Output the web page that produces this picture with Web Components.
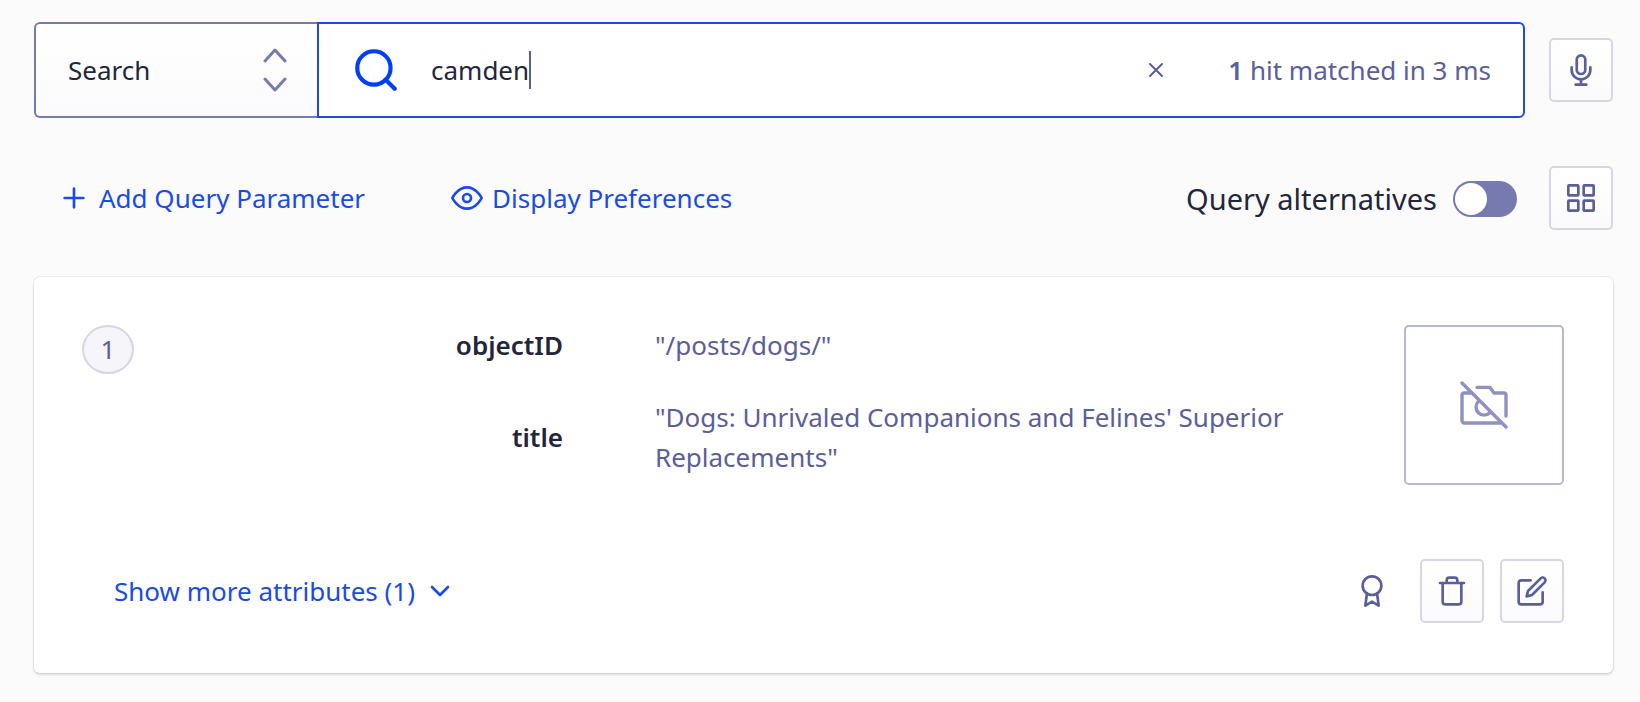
<!DOCTYPE html>
<html lang="en">
<head>
<meta charset="utf-8">
<title>Browse index</title>
<style>
  body {
    margin: 0;
    background: #fbfbfc;
    color: #23263b;
    font-family: "Noto Sans", "Open Sans", sans-serif;
    font-size: 26px;
    line-height: 40px;
    --blue: #1a4be4;
    --ink: #23263b;
    --muted: #5a5e9a;
    --line: #d6d6e7;
  }
</style>
</head>
<body>
<index-browser></index-browser>

<script>
'use strict'

const ICONS = {
  search: '<circle cx="11" cy="11" r="8"/><path d="M21 21l-4.35-4.35"/>',
  close: '<path d="M18 6L6 18M6 6l12 12"/>',
  mic: '<path d="M12 1a3.2 3.2 0 0 0-3.2 3.2v7.6a3.2 3.2 0 0 0 6.4 0V4.200a3.2 3.2 0 0 0-3.200-3.200z"/><path d="M19 10v2a7 7 0 0 1-14 0v-2M12 19v4M8 23h8"/>',
  plus: '<path d="M12 5v14M5 12h14"/>',
  eye: '<path d="M1 12s4-8 11-8 11 8 11 8-4 8-11 8-11-8-11-8z"/><circle cx="12" cy="12" r="3"/>',
  grid: '<rect x="2.500" y="2.500" width="7.500" height="7.500" rx=".5"/><rect x="14" y="2.500" width="7.500" height="7.500" rx=".5"/><rect x="14" y="14" width="7.500" height="7.500" rx=".5"/><rect x="2.500" y="14" width="7.500" height="7.500" rx=".5"/>',
  camera: '<g stroke-width="1.700"><path d="M1 1l22 22M20.500 21H2.200A1.200 1.200 0 0 1 1 19.800V7.200A1.200 1.200 0 0 1 2.200 6H5.500M8.500 3.200h6.500l2 2.800h4.800A1.200 1.200 0 0 1 23 7.200v10.300M14.900 15.900a4 4 0 1 1-5.700-5.700"/></g>',
  down: '<path d="M6 9l6 6 6-6"/>',
  award: '<circle cx="12" cy="8" r="7"/><path d="M8.21 13.89L7 23l5-3 5 3-1.21-9.12"/>',
  trash: '<path d="M3 6h18M19 6v14a2 2 0 0 1-2 2H7a2 2 0 0 1-2-2V6m3 0V4a2 2 0 0 1 2-2h4a2 2 0 0 1 2 2v2"/>',
  edit: '<path d="M11 4H4a2 2 0 0 0-2 2v14a2 2 0 0 0 2 2h14a2 2 0 0 0 2-2v-7"/><path d="M18.5 2.5a2.121 2.121 0 0 1 3 3L12 15l-4 1 1-4 9.5-9.5z"/>'
}

class LineIcon extends HTMLElement {
  connectedCallback() {
    const root = this.attachShadow({ mode: 'open' })
    root.innerHTML = `
    <style>
    :host {
      display: block;
      flex: none;
      width: var(--size, 32px);
      height: var(--size, 32px);
    }
    svg {
      display: block;
      width: 100%;
      height: 100%;
      fill: none;
      stroke: currentColor;
      stroke-width: 2;
      stroke-linecap: round;
      stroke-linejoin: round;
    }
    </style>
    <svg viewBox="0 0 24 24" aria-hidden="true">${ICONS[this.getAttribute('name')]}</svg>
    `
  }
}

class IconButton extends HTMLElement {
  connectedCallback() {
    const root = this.attachShadow({ mode: 'open' })
    root.innerHTML = `
    <style>
    :host {
      display: block;
      flex: none;
    }
    button {
      display: grid;
      place-items: center;
      box-sizing: border-box;
      width: 64px;
      height: 64px;
      padding: 0;
      border: 2px solid var(--line);
      border-radius: 5px;
      background: linear-gradient(#fff, #fbfbfd);
      color: var(--muted);
      cursor: pointer;
    }
    :host([plain]) button {
      border-color: transparent;
      background: none;
    }
    </style>
    <button type="button" aria-label="${this.getAttribute('label')}">
      <line-icon name="${this.getAttribute('icon')}"></line-icon>
    </button>
    `
  }
}

class TextButton extends HTMLElement {
  connectedCallback() {
    const root = this.attachShadow({ mode: 'open' })
    root.innerHTML = `
    <style>
    :host {
      display: block;
    }
    button {
      display: flex;
      align-items: center;
      gap: 9px;
      padding: 0;
      border: 0;
      background: none;
      color: var(--blue);
      font: inherit;
      cursor: pointer;
    }
    </style>
    <button type="button"><slot name="before"></slot><slot></slot><slot name="after"></slot></button>
    `
  }
}

class SearchBar extends HTMLElement {
  connectedCallback() {
    const root = this.attachShadow({ mode: 'open' })
    root.innerHTML = `
    <style>
    :host {
      display: flex;
      flex: 1;
      height: 96px;
      min-width: 0;
    }
    .mode {
      display: grid;
      flex: none;
      width: 283px;
      align-items: center;
    }
    .mode > * {
      grid-area: 1 / 1;
    }
    select {
      box-sizing: border-box;
      width: 100%;
      height: 100%;
      padding: 0 64px 0 32px;
      border: 2px solid #777aaf;
      border-right: 0;
      border-radius: 6px 0 0 6px;
      appearance: none;
      background: linear-gradient(#fff, #fbfbfd);
      color: var(--ink);
      font: inherit;
    }
    .mode svg {
      justify-self: end;
      margin-right: 30px;
      fill: none;
      stroke: #777aaf;
      stroke-width: 3;
      stroke-linecap: round;
      stroke-linejoin: round;
      pointer-events: none;
    }
    .query {
      display: flex;
      flex: 1;
      box-sizing: border-box;
      min-width: 0;
      align-items: center;
      padding: 0 32px;
      border: 2px solid var(--blue);
      border-radius: 0 6px 6px 0;
      background: #fff;
    }
    .query > line-icon {
      --size: 50px;
      color: #003dff;
    }
    .value {
      flex: 1;
      padding-left: 30px;
      line-height: 0;
    }
    input {
      height: 38px;
      min-width: 2px;
      padding: 0;
      border: 0;
      border-right: 2px solid #5a5e9a;
      outline: 0;
      background: none;
      color: var(--ink);
      font: inherit;
      field-sizing: content;
    }
    .clear {
      padding: 0;
      border: 0;
      background: none;
      color: var(--muted);
      --size: 24px;
    }
    output {
      padding-left: 60px;
      color: var(--muted);
      white-space: nowrap;
    }
    </style>
    <div class="mode">
      <select aria-label="Mode"><option>Search</option></select>
      <svg width="24" height="44" aria-hidden="true"><path d="M2 13L12 2l10 11M2 31l10 11 10-11"/></svg>
    </div>
    <div class="query">
      <line-icon name="search"></line-icon>
      <div class="value"><input type="text" aria-label="Query" value="camden" spellcheck="false"></div>
      <button class="clear" type="button" aria-label="Clear"><line-icon name="close"></line-icon></button>
      <output><slot></slot></output>
    </div>
    `
    root.querySelector('.clear').onclick = () => {
      root.querySelector('input').value = ''
    }
  }
}

class ToggleSwitch extends HTMLElement {
  connectedCallback() {
    const root = this.attachShadow({ mode: 'open' })
    root.innerHTML = `
    <style>
    :host {
      display: block;
    }
    label {
      display: flex;
      align-items: center;
      gap: 16px;
      padding-top: 2px;
      font-size: 29px;
    }
    input {
      display: flex;
      box-sizing: border-box;
      width: 64px;
      height: 36px;
      margin: 0;
      padding: 2px;
      border-radius: 18px;
      appearance: none;
      background: #777aaf;
    }
    input::before {
      content: "";
      width: 32px;
      height: 32px;
      border-radius: 50%;
      background: #fff;
    }
    input:checked {
      justify-content: flex-end;
      background: var(--blue);
    }
    </style>
    <label><slot></slot><input type="checkbox" role="switch"></label>
    `
  }
}

class HitCard extends HTMLElement {
  connectedCallback() {
    const root = this.attachShadow({ mode: 'open' })
    root.innerHTML = `
    <style>
    :host {
      display: block;
      padding: 48px 49px 50px 48px;
      border-radius: 6px;
      background: #fff;
      box-shadow: 0 0 0 1px rgba(35, 38, 59, 0.07), 0 2px 3px rgba(35, 38, 59, 0.14);
    }
    .body {
      display: grid;
      grid-template-columns: 52px 1fr 160px;
      column-gap: 48px;
      align-items: start;
    }
    .rank {
      box-sizing: border-box;
      height: 49px;
      border: 2px solid var(--line);
      border-radius: 50%;
      background: #f5f5fa;
      color: var(--muted);
      line-height: 45px;
      text-align: center;
    }
    dl {
      display: grid;
      grid-template-columns: 1fr 701px;
      gap: 32px 92px;
      align-items: center;
      margin: 0;
    }
    dt {
      font-weight: 600;
      text-align: right;
    }
    dd {
      margin: 0;
      color: var(--muted);
    }
    .picture {
      display: grid;
      box-sizing: border-box;
      height: 160px;
      place-items: center;
      border: 2px solid #b6b7d5;
      border-radius: 5px;
      color: #8f91c0;
      --size: 48px;
    }
    footer {
      display: flex;
      align-items: center;
      gap: 16px;
      margin-top: 74px;
    }
    text-button {
      flex: 1;
      padding-left: 32px;
    }
    </style>
    <div class="body">
      <div class="rank"><slot name="rank"></slot></div>
      <dl>
        <dt>objectID</dt>
        <dd><slot name="object-id"></slot></dd>
        <dt>title</dt>
        <dd><slot name="title"></slot></dd>
      </dl>
      <div class="picture" role="img" aria-label="No image"><line-icon name="camera"></line-icon></div>
    </div>
    <footer>
      <text-button>Show more attributes (1)<line-icon slot="after" name="down"></line-icon></text-button>
      <icon-button plain icon="award" label="Ranking"></icon-button>
      <icon-button icon="trash" label="Delete"></icon-button>
      <icon-button icon="edit" label="Edit"></icon-button>
    </footer>
    `
  }
}

class IndexBrowser extends HTMLElement {
  connectedCallback() {
    const root = this.attachShadow({ mode: 'open' })
    root.innerHTML = `
    <style>
    :host {
      display: block;
      padding: 22px 27px 28px 34px;
    }
    .row {
      display: flex;
      align-items: center;
      gap: 24px;
    }
    .tools {
      gap: 32px;
      margin: 48px 0 47px;
      padding-left: 24px;
    }
    .links {
      display: flex;
      flex: 1;
      gap: 86px;
    }
    b {
      font-weight: 600;
    }
    </style>
    <div class="row">
      <search-bar><b>1</b> hit matched in 3 ms</search-bar>
      <icon-button icon="mic" label="Voice search"></icon-button>
    </div>
    <div class="row tools">
      <div class="links">
        <text-button><line-icon slot="before" name="plus"></line-icon>Add Query Parameter</text-button>
        <text-button><line-icon slot="before" name="eye"></line-icon>Display Preferences</text-button>
      </div>
      <toggle-switch>Query alternatives</toggle-switch>
      <icon-button icon="grid" label="Grid view"></icon-button>
    </div>
    <hit-card>
      <span slot="rank">1</span>
      <span slot="object-id">"/posts/dogs/"</span>
      <span slot="title">"Dogs: Unrivaled Companions and Felines' Superior Replacements"</span>
    </hit-card>
    `
  }
}

customElements.define('line-icon', LineIcon)
customElements.define('icon-button', IconButton)
customElements.define('text-button', TextButton)
customElements.define('search-bar', SearchBar)
customElements.define('toggle-switch', ToggleSwitch)
customElements.define('hit-card', HitCard)
customElements.define('index-browser', IndexBrowser)
</script>
</body>
</html>
